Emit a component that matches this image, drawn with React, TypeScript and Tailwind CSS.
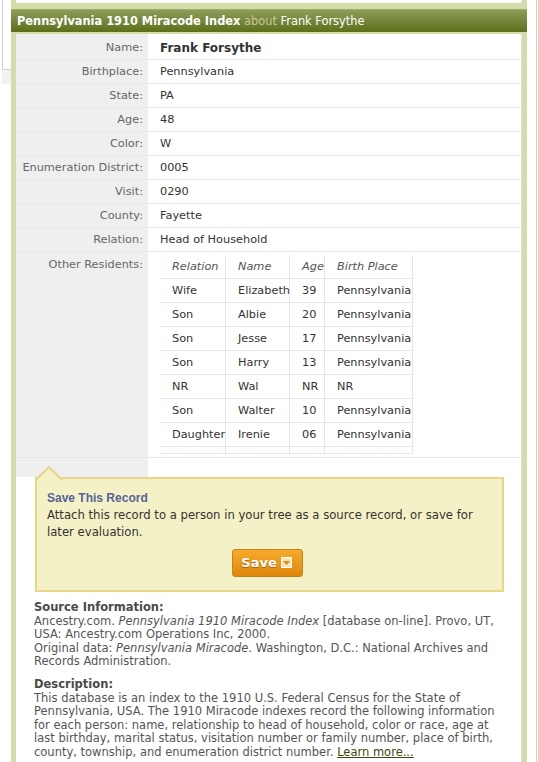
import React from 'react';

const rows: { label: string; value: string; strong?: boolean }[] = [
  { label: 'Name:', value: 'Frank Forsythe', strong: true },
  { label: 'Birthplace:', value: 'Pennsylvania' },
  { label: 'State:', value: 'PA' },
  { label: 'Age:', value: '48' },
  { label: 'Color:', value: 'W' },
  { label: 'Enumeration District:', value: '0005' },
  { label: 'Visit:', value: '0290' },
  { label: 'County:', value: 'Fayette' },
  { label: 'Relation:', value: 'Head of Household' },
];

const residents = [
  ['Wife', 'Elizabeth', '39', 'Pennsylvania'],
  ['Son', 'Albie', '20', 'Pennsylvania'],
  ['Son', 'Jesse', '17', 'Pennsylvania'],
  ['Son', 'Harry', '13', 'Pennsylvania'],
  ['NR', 'Wal', 'NR', 'NR'],
  ['Son', 'Walter', '10', 'Pennsylvania'],
  ['Daughter', 'Irenie', '06', 'Pennsylvania'],
];

const colW = ['w-[66px]', 'w-[64px]', 'w-[35px]', 'w-[88px]'];

function ResidentRow({ cells, head, empty }: { cells: string[]; head?: boolean; empty?: boolean }) {
  return (
    <div className={`flex border-b border-[#e6e6e6] ${empty ? 'h-[7px]' : 'h-[24px]'}`}>
      {cells.map((c, i) => (
        <div
          key={i}
          className={`${colW[i]} shrink-0 whitespace-nowrap border-r border-[#e6e6e6] pl-[12px] leading-[23px] ${head ? 'italic text-[#555]' : ''}`}
        >
          {c}
        </div>
      ))}
    </div>
  );
}

export default function App() {
  return (
    <div className="flex h-[762px] w-[538px] overflow-hidden bg-white font-['DejaVu_Sans',sans-serif] text-[11.3px] text-[#333]">
      {/* left edge of neighbouring column */}
      <div className="w-[11px] shrink-0 pl-[2px]">
        <div className="h-[70px] border-b border-l border-[#cfcfcf]" />
        <div className="h-[14px] bg-[#f2f2f2]" />
      </div>

      {/* green frame */}
      <div className="flex w-[516px] shrink-0 flex-col bg-[#d6dca8] px-[5px]">
        <div className="h-[3px] border-r border-[#e2e2e2] bg-white" />
        <div className="-mx-[5px] mt-[6px] h-[23px] border-t border-[#9fae6c] bg-linear-to-b from-[#8e9d59] to-[#5b7017] pl-[6px] text-[11.4px] leading-[22px] whitespace-nowrap">
          <span className="font-bold text-white">Pennsylvania 1910 Miracode Index</span>
          <span className="text-[#cbc68f]"> about </span>
          <span className="text-white">Frank Forsythe</span>
        </div>

        <div className="mt-[2px] flex-1 border-r border-[#e2e2e2] bg-white">
          {rows.map((r, i) => (
            <div key={r.label} className={`flex border-b border-[#e6e6e6] ${i === 0 ? 'h-[26px]' : 'h-[24px]'}`}>
              <div className={`w-[132px] shrink-0 bg-[#efefef] pr-[5px] text-right leading-[23px] text-[#666] ${i === 0 ? 'pt-[2px]' : ''}`}>
                {r.label}
              </div>
              <div className={`pl-[12px] leading-[23px] ${i === 0 ? 'pt-[3px]' : ''} ${r.strong ? 'text-[12px] font-bold' : ''}`}>
                {r.value}
              </div>
            </div>
          ))}

          <div className="flex border-b border-[#e6e6e6]">
            <div className="w-[132px] shrink-0 bg-[#efefef] pr-[5px] pt-[1px] text-right leading-[23px] text-[#666]">Other Residents:</div>
            <div className="pb-[3px] pl-[12px] pt-[3px]">
              <ResidentRow cells={['Relation', 'Name', 'Age', 'Birth Place']} head />
              {residents.map((r, i) => (
                <ResidentRow key={i} cells={r} />
              ))}
              <ResidentRow cells={['', '', '', '']} empty />
            </div>
          </div>
          <div className="h-[19px] w-[132px] bg-[#efefef]" />

          {/* save callout */}
          <div className="relative ml-[19px] mr-[17px] border-2 border-[#e7d588] bg-[#f4f1c6] px-[10px] pb-[13.5px] pt-[10.5px] text-[11.65px] leading-[17px]">
            <svg className="absolute -top-[14px] -left-[2px]" width="28" height="16" viewBox="0 0 28 16">
              <polygon points="0,16 14,2 28,16" fill="#f4f1c6" />
              <polyline points="1,15 14,2 27,15" fill="none" stroke="#e7d588" strokeWidth="2" />
            </svg>
            <div className="font-['Liberation_Sans',Arial,sans-serif] text-[12px] font-bold text-[#56639a]">Save This Record</div>
            <p className="text-[#333]">Attach this record to a person in your tree as a source record, or save for later evaluation.</p>
            <div className="mt-[8px] flex justify-center pr-[4px]">
              <button className="flex h-[28px] items-center gap-[4px] rounded-[3px] border border-[#c4861c] bg-linear-to-b from-[#f6ab2a] to-[#df860b] pl-[8px] pr-[10px] text-[13px] font-bold text-white [text-shadow:0_1px_1px_rgba(120,60,0,0.6)]">
                Save
                <span className="flex h-[11px] w-[11px] items-center justify-center border border-white bg-[#fbe3b5]">
                  <svg width="7" height="4" viewBox="0 0 7 4">
                    <polygon points="0,0 7,0 3.5,4" fill="#e08a10" />
                  </svg>
                </span>
              </button>
            </div>
          </div>

          {/* source and description */}
          <div className="mt-[9px] pl-[18px] pr-[17px] text-[11.5px] leading-[13.5px] text-[#555]">
            <div className="font-bold text-[#4a4a4a]">Source Information:</div>
            <p>
              Ancestry.com. <i>Pennsylvania 1910 Miracode Index</i> [database on-line]. Provo, UT, USA: Ancestry.com Operations Inc, 2000.
              <br />
              Original data: <i>Pennsylvania Miracode</i>. Washington, D.C.: National Archives and Records Administration.
            </p>
            <div className="mt-[9.5px] font-bold text-[#4a4a4a]">Description:</div>
            <p>
              This database is an index to the 1910 U.S. Federal Census for the State of Pennsylvania, USA. The 1910 Miracode indexes record the following information for each person: name, relationship to head of household, color or race, age at last birthday, marital status, visitation number or family number, place of birth, county, township, and enumeration district number.{' '}
              <a href="#" className="text-[#3c4b0c] underline">Learn more...</a>
            </p>
          </div>
        </div>
      </div>

      {/* right edge */}
      <div className="w-[11px] shrink-0 pl-[9px]">
        <div className="h-full w-[1px] bg-[#dccdb0]" />
      </div>
    </div>
  );
}
